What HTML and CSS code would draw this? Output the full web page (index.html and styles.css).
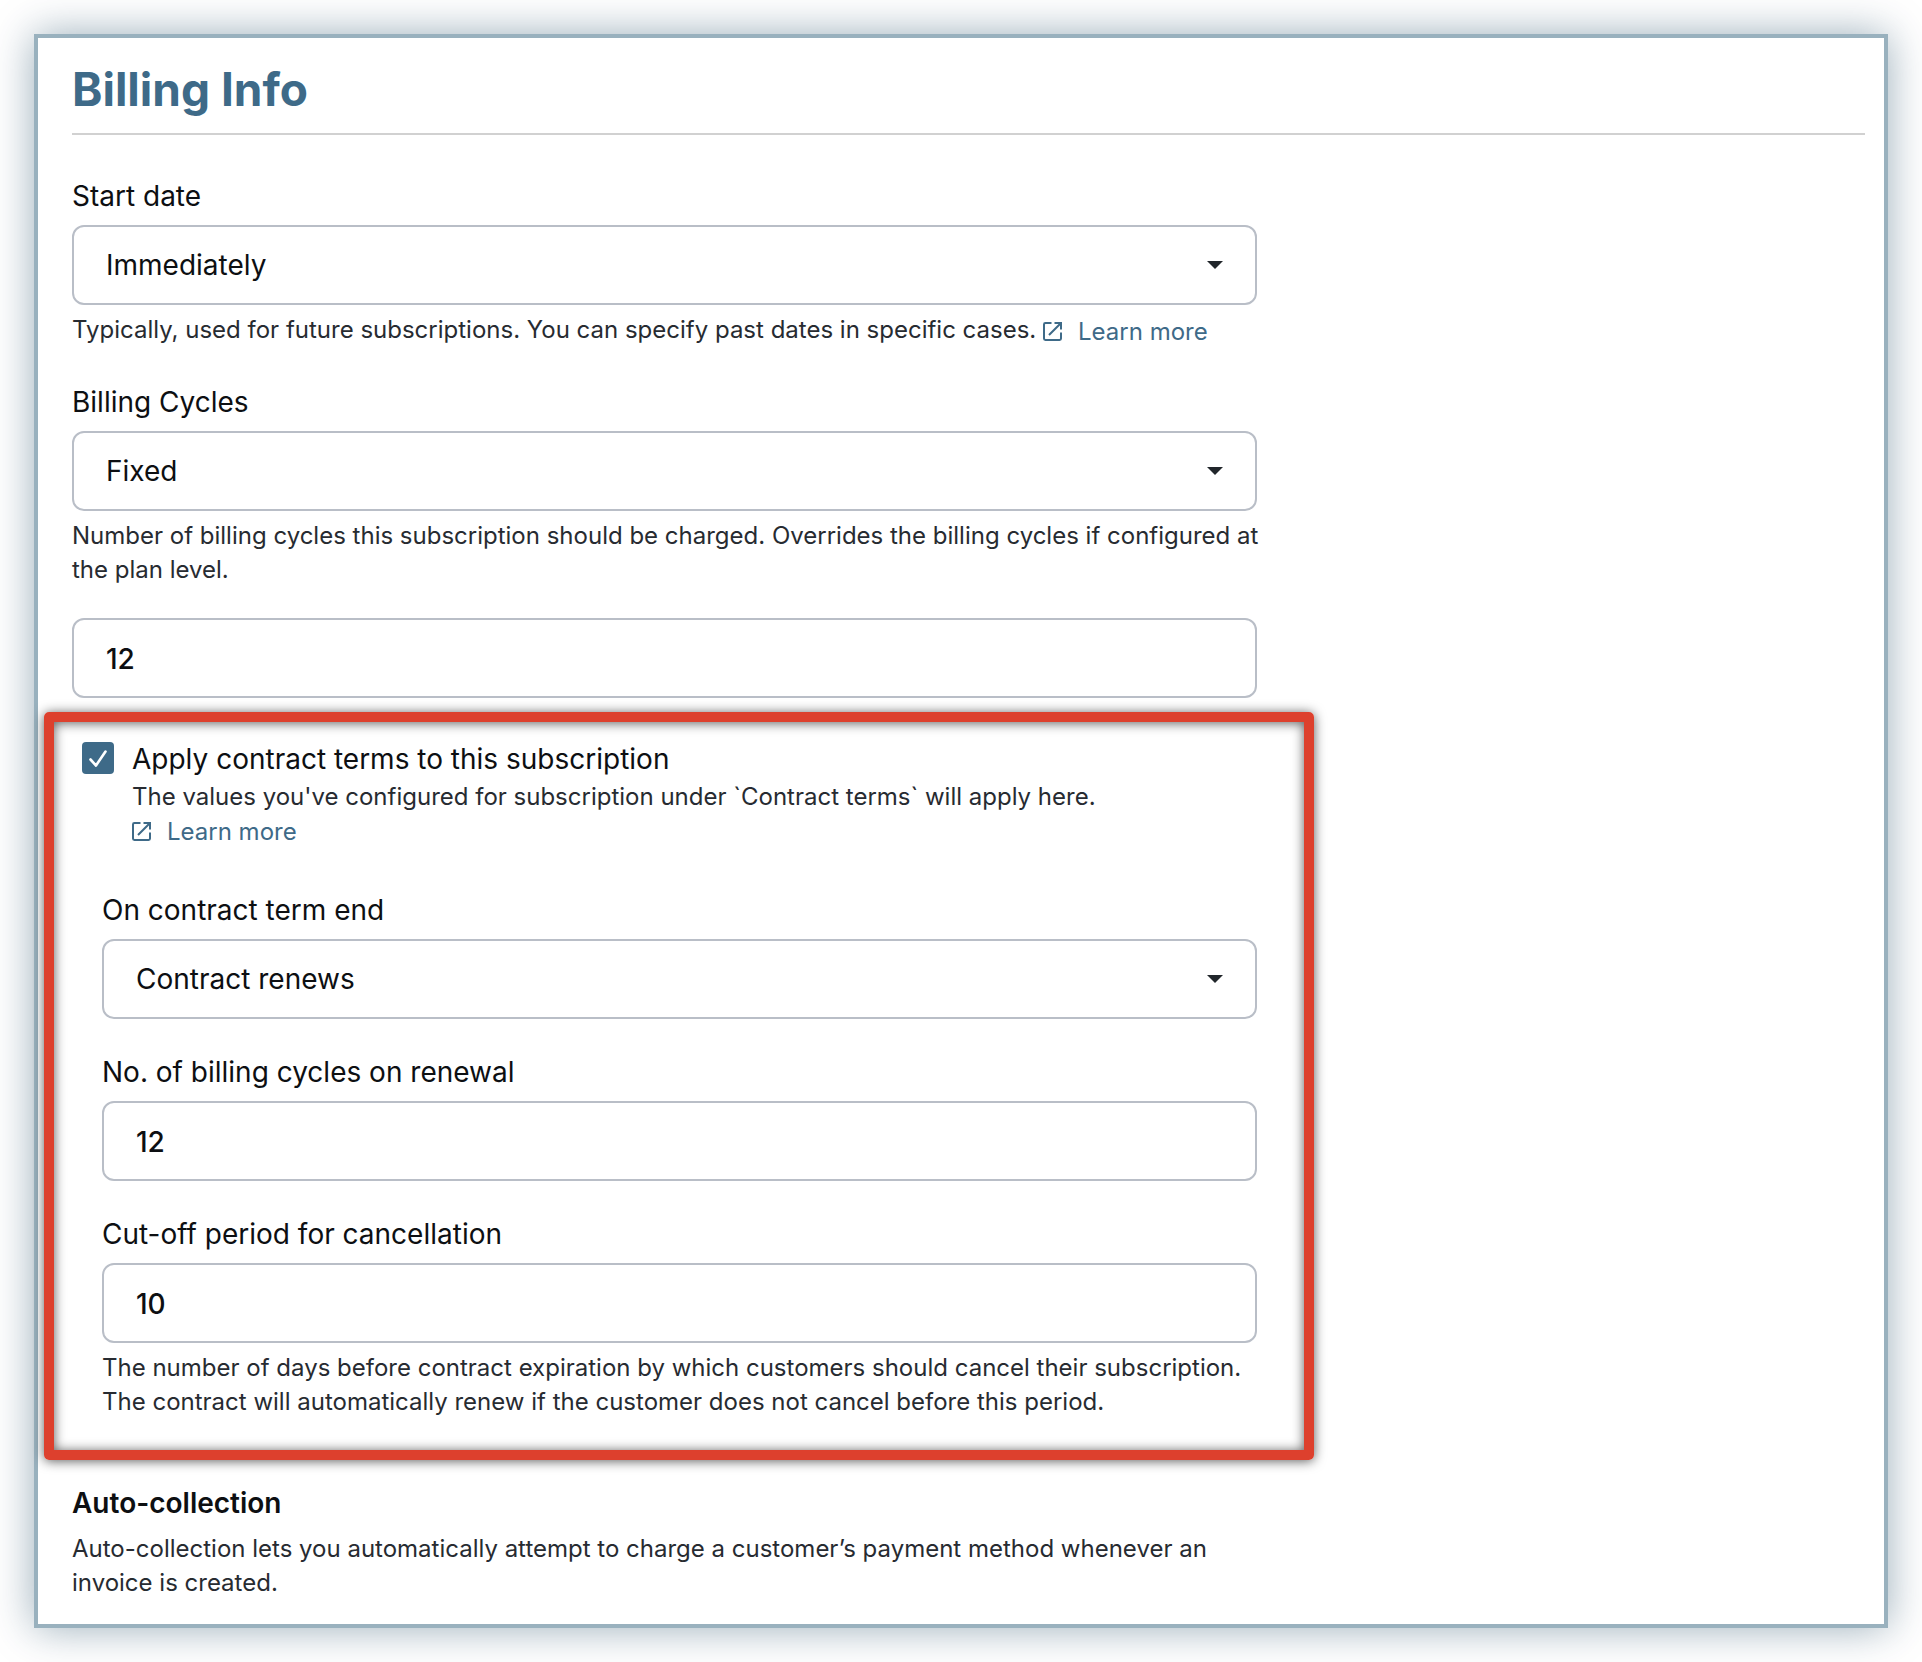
FILE: index.html
```html
<!DOCTYPE html>
<html lang="en">
<head>
<meta charset="utf-8">
<meta name="viewport" content="width=device-width, initial-scale=1">
<title>Billing Info</title>
<link rel="stylesheet" href="styles.css">
</head>
<body>
<svg class="sprite" aria-hidden="true">
  <symbol id="external" viewBox="0 0 19 19">
    <path d="M8.500 1H2.4Q1 1 1 2.4V16.600Q1 18 2.400 18H16.600Q18 18 18 16.600V10.500" fill="none" stroke="currentColor" stroke-width="2"/>
    <path d="M11.500 1H18V7.500M18 1L6 13" fill="none" stroke="currentColor" stroke-width="2"/>
  </symbol>
  <symbol id="caret" viewBox="0 0 16 8"><path d="M0 0H16L8 8Z" fill="currentColor"/></symbol>
</svg>
<main class="card">
  <h1 class="title">Billing Info</h1>
  <form class="form">
    <div class="field">
      <label class="label" for="start">Start date</label>
      <div class="select">
        <select class="control" id="start"><option>Immediately</option></select>
        <svg class="caret" aria-hidden="true"><use href="#caret"/></svg>
      </div>
      <p class="help">Typically, used for future subscriptions. You can specify past dates in specific cases. <a class="link" href="#start"><svg class="external" aria-hidden="true"><use href="#external"/></svg>Learn more</a></p>
    </div>

    <div class="field">
      <label class="label" for="cycles">Billing Cycles</label>
      <div class="select">
        <select class="control" id="cycles"><option>Fixed</option></select>
        <svg class="caret" aria-hidden="true"><use href="#caret"/></svg>
      </div>
      <p class="help">Number of billing cycles this subscription should be charged. Overrides the billing cycles if configured at the plan level.</p>
    </div>
    <input class="control number cycle-count" type="text" inputmode="numeric" value="12" aria-label="Number of billing cycles">

    <section class="contract">
      <div class="apply">
        <input class="check" type="checkbox" id="apply" checked>
        <div class="apply-text">
          <label class="label" for="apply">Apply contract terms to this subscription</label>
          <p class="help">The values you've configured for subscription under `Contract terms` will apply here.</p>
          <a class="link" href="#apply"><svg class="external" aria-hidden="true"><use href="#external"/></svg>Learn more</a>
        </div>
      </div>
      <div class="terms">
        <div class="field">
          <label class="label" for="term-end">On contract term end</label>
          <div class="select">
            <select class="control" id="term-end"><option>Contract renews</option></select>
            <svg class="caret" aria-hidden="true"><use href="#caret"/></svg>
          </div>
        </div>
        <div class="field">
          <label class="label" for="renewal">No. of billing cycles on renewal</label>
          <input class="control number" type="text" inputmode="numeric" id="renewal" value="12">
        </div>
        <div class="field">
          <label class="label" for="cutoff">Cut-off period for cancellation</label>
          <input class="control number" type="text" inputmode="numeric" id="cutoff" value="10">
          <p class="help">The number of days before contract expiration by which customers should cancel their subscription. The contract will automatically renew if the customer does not cancel before this period.</p>
        </div>
      </div>
    </section>

    <section class="auto">
      <h2 class="subtitle">Auto-collection</h2>
      <p class="help">Auto-collection lets you automatically attempt to charge a customer’s payment method whenever an invoice is created.</p>
    </section>
  </form>
</main>
</body>
</html>
```

FILE: styles.css
```css
* { box-sizing: border-box; }

body {
  margin: 0;
  padding: 34px;
  background: #fff;
  color: #0d0f12;
  font: 28px/34px Inter, "Liberation Sans", sans-serif;
}

.sprite { display: none; }

.card {
  padding: 16px 19px 24px 34px;
  border: 4px solid #99b1be;
  background: #fff;
  box-shadow: 0 0 40px rgba(0, 50, 80, .4);
}

.title {
  margin: 0 0 44px;
  padding-bottom: 8px;
  border-bottom: 2px solid #d1d1d1;
  color: #3e6a88;
  font-size: 46px;
  line-height: 71px;
  font-weight: 700;
}

.form { max-width: 1185px; }

.field { display: flex; flex-direction: column; }
.field + .field { margin-top: 36px; }

.label { display: block; }
.field .label { margin-bottom: 12px; }

.control {
  display: block;
  width: 100%;
  height: 80px;
  margin: 0;
  padding: 0 32px;
  border: 2px solid #b9bec7;
  border-radius: 12px;
  background: #fff;
  color: #0d0f12;
  font: inherit;
  appearance: none;
}

.number {
  padding-top: 2px;
  font-weight: 500;
}
.cycle-count { margin-top: 31px; }

.select { position: relative; }
.caret {
  position: absolute;
  top: 36px;
  right: 34px;
  width: 16px;
  height: 8px;
  color: #21262b;
  pointer-events: none;
}

.help {
  margin: 0;
  color: #272b31;
  font-size: 24px;
  line-height: 34px;
}
.field .help { margin: 8px -8px 0 0; }

.link {
  color: #3e6a88;
  font-size: 24px;
  line-height: 36px;
  text-decoration: none;
}
.help .link {
  line-height: 34px;
  vertical-align: -2px;
}
.external {
  width: 19px;
  height: 19px;
  margin-right: 16px;
  vertical-align: -1px;
}

.contract {
  margin: 14px -57px 26px -28px;
  padding: 20px 47px 31px 28px;
  border: 10px solid #dd402d;
  border-radius: 5px;
  box-shadow: 0 1px 12px rgba(0, 0, 0, .65), inset 0 1px 12px rgba(0, 0, 0, .65);
}

.apply { display: flex; gap: 18px; }
.apply-text { display: flex; flex-direction: column; align-items: flex-start; }
.apply .help { margin-top: 4px; }

.check {
  flex: none;
  width: 32px;
  height: 32px;
  margin: 0;
  border-radius: 4px;
  background: #3e6a88 url("data:image/svg+xml,%3Csvg xmlns='http://www.w3.org/2000/svg' viewBox='0 0 32 32'%3E%3Cpath d='M8.500 17.500L14 23.500L23.500 9.500' fill='none' stroke='white' stroke-width='2.600' stroke-linecap='round' stroke-linejoin='round'/%3E%3C/svg%3E");
  appearance: none;
}

.terms { margin: 43px 0 0 20px; }

.subtitle {
  margin: 0 0 12px;
  font-size: 28px;
  line-height: 34px;
  font-weight: 600;
}
```
